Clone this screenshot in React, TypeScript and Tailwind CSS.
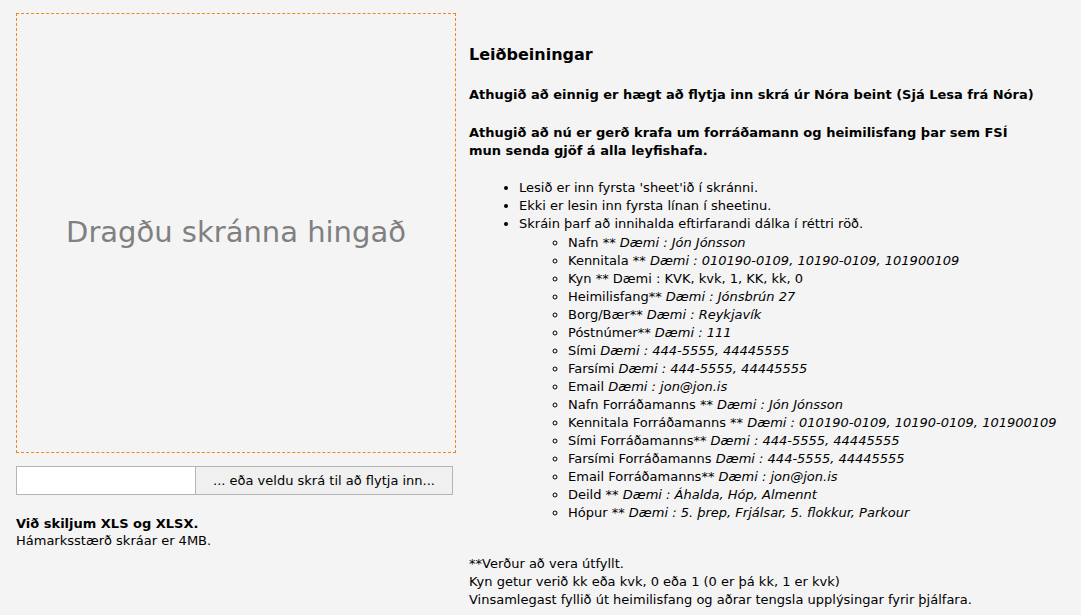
const font = { fontFamily: "Tahoma, 'DejaVu Sans', Verdana, sans-serif" };

type Field = { label: string; example: string };

const fields: Field[] = [
  { label: "Nafn ** ", example: "Dæmi : Jón Jónsson" },
  { label: "Kennitala ** ", example: "Dæmi : 010190-0109, 10190-0109, 101900109" },
  { label: "Kyn ** Dæmi : KVK, kvk, 1, KK, kk, 0", example: "" },
  { label: "Heimilisfang** ", example: "Dæmi : Jónsbrún 27" },
  { label: "Borg/Bær** ", example: "Dæmi : Reykjavík" },
  { label: "Póstnúmer** ", example: "Dæmi : 111" },
  { label: "Sími ", example: "Dæmi : 444-5555, 44445555" },
  { label: "Farsími ", example: "Dæmi : 444-5555, 44445555" },
  { label: "Email ", example: "Dæmi : jon@jon.is" },
  { label: "Nafn Forráðamanns ** ", example: "Dæmi : Jón Jónsson" },
  { label: "Kennitala Forráðamanns ** ", example: "Dæmi : 010190-0109, 10190-0109, 101900109" },
  { label: "Sími Forráðamanns** ", example: "Dæmi : 444-5555, 44445555" },
  { label: "Farsími Forráðamanns ", example: "Dæmi : 444-5555, 44445555" },
  { label: "Email Forráðamanns** ", example: "Dæmi : jon@jon.is" },
  { label: "Deild ** ", example: "Dæmi : Áhalda, Hóp, Almennt" },
  { label: "Hópur ** ", example: "Dæmi : 5. þrep, Frjálsar, 5. flokkur, Parkour" },
];

function DropZone() {
  return (
    <div className="flex w-[440px] shrink-0 flex-col">
      <div className="flex h-[440px] items-center justify-center border border-dashed border-[#f0861e]">
        <span className="text-[29px] text-[#808080]">Dragðu skránna hingað</span>
      </div>
      <div className="mt-[13px] flex h-[29px] w-[437px] border border-[#b4b4b4] bg-white text-[13px]">
        <div className="w-[178px] bg-white" />
        <button
          type="button"
          className="flex-1 border-l border-[#b4b4b4] bg-[#f0f0f0] text-[13px] text-black"
        >
          ... eða veldu skrá til að flytja inn...
        </button>
      </div>
      <div className="mt-[20px] text-[13px] leading-[17px]">
        <div className="font-bold">Við skiljum XLS og XLSX.</div>
        <div>Hámarksstærð skráar er 4MB.</div>
      </div>
    </div>
  );
}

function Instructions() {
  return (
    <div className="pt-[31px] text-[13px] leading-[18px] text-black">
      <h3 className="text-[16px] font-bold leading-[22px]">Leiðbeiningar</h3>
      <p className="mt-[20px] font-bold">
        Athugið að einnig er hægt að flytja inn skrá úr Nóra beint (Sjá Lesa frá Nóra)
      </p>
      <p className="mt-[20px] w-[565px] font-bold">
        Athugið að nú er gerð krafa um forráðamann og heimilisfang þar sem FSÍ mun senda gjöf á alla
        leyfishafa.
      </p>
      <ul className="mt-[19px] list-disc pl-[50px]">
        <li>Lesið er inn fyrsta 'sheet'ið í skránni.</li>
        <li>Ekki er lesin inn fyrsta línan í sheetinu.</li>
        <li>
          Skráin þarf að innihalda eftirfarandi dálka í réttri röð.
          <ul className="mt-[1px] list-[circle] pl-[49px]">
            {fields.map((f) => (
              <li key={f.label} className="whitespace-nowrap">
                {f.label}
                {f.example && <i>{f.example}</i>}
              </li>
            ))}
          </ul>
        </li>
      </ul>
      <div className="mt-[33px]">
        <div>**Verður að vera útfyllt.</div>
        <div>Kyn getur verið kk eða kvk, 0 eða 1 (0 er þá kk, 1 er kvk)</div>
        <div>Vinsamlegast fyllið út heimilisfang og aðrar tengsla upplýsingar fyrir þjálfara.</div>
      </div>
    </div>
  );
}

export default function App() {
  return (
    <div className="min-h-[615px] overflow-hidden bg-[#f4f4f4] text-black" style={font}>
      <div className="flex gap-[13px] pl-[16px] pt-[13px]">
        <DropZone />
        <Instructions />
      </div>
    </div>
  );
}
